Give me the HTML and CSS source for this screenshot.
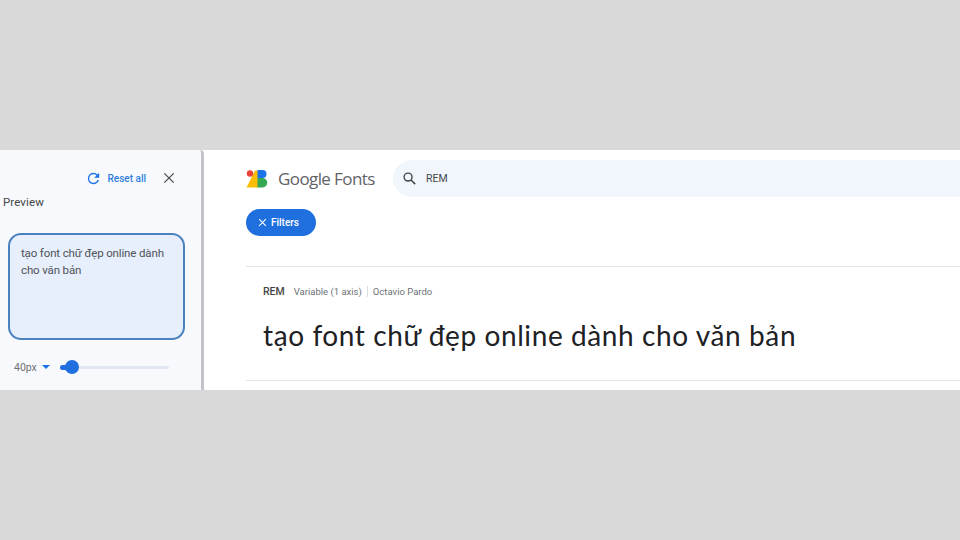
FILE: index.html
```html
<!DOCTYPE html>
<html lang="vi">
<head>
<meta charset="utf-8">
<title>Google Fonts</title>
<link rel="stylesheet" href="styles.css">
</head>
<body>
<div class="app">
  <aside class="side">
    <div class="side-top">
      <svg class="reset-icon" viewBox="0 0 24 24" width="17" height="17"><path d="M17.65 6.35A7.96 7.96 0 0 0 12 4a8 8 0 1 0 7.73 10h-2.08A6 6 0 1 1 12 6c1.66 0 3.14.69 4.22 1.78L13 11h7V4z" fill="#1a73e8"/></svg>
      <span class="reset">Reset all</span>
      <svg class="close-icon" viewBox="0 0 24 24" width="16" height="16"><path d="M5 5l14 14M19 5L5 19" stroke="#444746" stroke-width="1.8" fill="none"/></svg>
    </div>
    <div class="preview-label">Preview</div>
    <div class="preview-box">tạo font chữ đẹp online dành cho văn bản</div>
    <div class="size-row">
      <span class="size">40px</span>
      <span class="caret"></span>
      <div class="slider"><span class="fill"></span><span class="thumb"></span></div>
    </div>
  </aside>
  <main class="main">
    <header class="top">
      <svg class="logo" viewBox="0 0 22 20" width="22" height="20">
        <path d="M0.5 18.5 L9 1.5 H13 V18.5 Z" fill="#fbbc04"/>
        <circle cx="4" cy="4.5" r="3.2" fill="#ea4335"/>
        <path d="M11.5 1 H16.5 A4 4 0 0 1 16.5 9 H11.5 Z" fill="#1a73e8"/>
        <path d="M11.5 9 H16.5 A4.75 4.75 0 0 1 16.5 18.5 H11.5 Z" fill="#34a853"/>
      </svg>
      <span class="brand">Google Fonts</span>
      <div class="search">
        <svg viewBox="0 0 24 24" width="17" height="17"><circle cx="10" cy="10" r="5.6" stroke="#444746" stroke-width="2" fill="none"/><path d="M14.2 14.2L20 20" stroke="#444746" stroke-width="2.2"/></svg>
        <span class="q">REM</span>
      </div>
    </header>
    <button class="filters">
      <svg viewBox="0 0 12 12" width="9" height="9"><path d="M1.5 1.5l9 9M10.5 1.5l-9 9" stroke="#fff" stroke-width="1.5" fill="none"/></svg>
      Filters
    </button>
    <section class="card">
      <div class="meta">
        <span class="name">REM</span>
        <span class="axis">Variable (1 axis)</span>
        <span class="author">Octavio Pardo</span>
      </div>
      <div class="sample">tạo font chữ đẹp online dành cho văn bản</div>
    </section>
  </main>
</div>
</body>
</html>
```
FILE: styles.css
```css
* { box-sizing: border-box; }
html, body { margin: 0; height: 100%; }
body {
  background: #d9d9d9;
  display: flex;
  align-items: center;
  font-family: Roboto, "Liberation Sans", sans-serif;
}
.app {
  width: 960px;
  height: 240px;
  display: flex;
  background: #fff;
  overflow: hidden;
}
.side {
  width: 204px;
  flex: none;
  background: #f8f9fd;
  border-right: 3px solid #c2c4ca;
  border-top-right-radius: 4px;
  padding: 20px 13px 0 3px;
  display: flex;
  flex-direction: column;
}
.side-top {
  display: flex;
  align-items: center;
  justify-content: flex-end;
  height: 16px;
  margin-right: 11px;
}
.reset-icon { margin-right: 6px; }
.reset { font-size: 10px; color: #2f7fe0; font-weight: 500; margin-right: 15px; }
.close-icon { display: block; }
.preview-label { font-size: 11.5px; color: #444746; margin-top: 9px; line-height: 14px; letter-spacing: .1px; }
.preview-box {
  margin: 24px 0 0 5px;
  width: 177px;
  height: 107px;
  border: 2px solid #4a82c0;
  border-radius: 13px;
  background: #e6effb;
  padding: 10px 8px 0 11px;
  font-size: 11.5px;
  letter-spacing: -.14px;
  line-height: 16.5px;
  color: #50535a;
}
.size-row {
  display: flex;
  align-items: center;
  height: 14px;
  margin: 20px 0 0 11px;
}
.size { font-size: 10.5px; color: #6d7175; }
.caret {
  width: 0; height: 0;
  border-left: 4px solid transparent;
  border-right: 4px solid transparent;
  border-top: 4px solid #1a73e8;
  margin-left: 5px;
}
.slider {
  position: relative;
  width: 109px;
  height: 3px;
  border-radius: 2px;
  background: #e1e8f3;
  margin-left: 10px;
}
.fill {
  position: absolute;
  left: 0; top: -1px;
  width: 12px; height: 5px;
  border-radius: 3px;
  background: #1f6fdf;
}
.thumb {
  position: absolute;
  left: 5px; top: -6px;
  width: 14px; height: 14px;
  border-radius: 50%;
  background: #1f6fdf;
}
.main { flex: 1; min-width: 0; padding: 10px 0 0 42px; display: flex; flex-direction: column; }
.top { display: flex; align-items: center; height: 37px; }
.logo { flex: none; }
.brand { font-family: "Open Sans", Roboto, sans-serif; font-size: 17px; color: #5f6368; margin-left: 10px; letter-spacing: -.6px; white-space: nowrap; width: 101px; }
.search {
  flex: 1;
  height: 37px;
  margin-left: 14px;
  border-radius: 19px 0 0 19px;
  background: #f1f5fc;
  display: flex;
  align-items: center;
  padding-left: 8px;
  gap: 8px;
}
.q { font-size: 10.5px; color: #444746; }
.filters {
  align-self: flex-start;
  margin-top: 12px;
  width: 70px;
  height: 27px;
  padding: 0 5px 0 0;
  border: 0;
  border-radius: 14px;
  background: #1f6fdf;
  color: #fff;
  font: 500 10px Roboto, sans-serif;
  display: flex;
  align-items: center;
  justify-content: center;
  gap: 4px;
}
.card {
  margin-top: 30px;
  height: 115px;
  border-top: 1px solid #e3e3e3;
  border-bottom: 1px solid #e3e3e3;
  padding: 17px 0 0 17px;
}
.meta { display: flex; align-items: center; height: 14px; font-size: 9.5px; color: #6d7175; }
.name { font-size: 10.5px; font-weight: 500; color: #444746; margin-right: 9px; }
.axis { padding-right: 5px; border-right: 1px solid #dadce0; margin-right: 5px; }
.sample {
  font-family: Lato, sans-serif;
  font-size: 28px;
  color: #202124;
  line-height: 36px;
  margin-top: 19px;
  letter-spacing: .6px;
  white-space: nowrap;
}
```
